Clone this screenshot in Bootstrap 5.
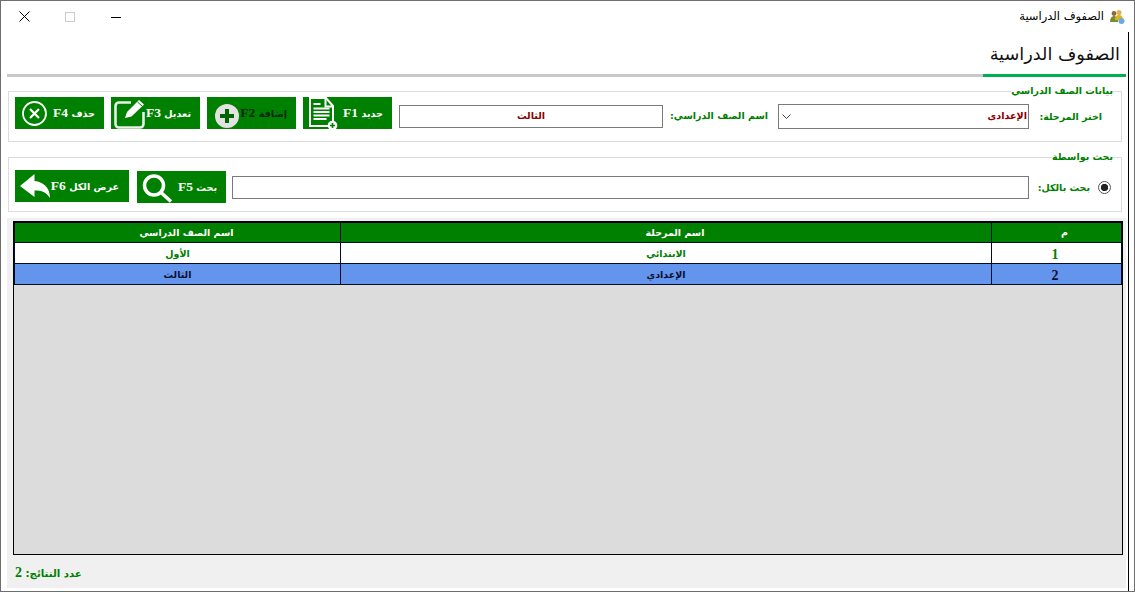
<!DOCTYPE html>
<html lang="ar" dir="rtl">
<head>
<meta charset="utf-8">
<title>الصفوف الدراسية</title>
<link href="https://cdn.jsdelivr.net/npm/bootstrap@5.3.0/dist/css/bootstrap.min.css" rel="stylesheet">
<style>
html,body{height:100%;margin:0;background:#fff;overflow:hidden}
body{font-family:"Liberation Serif","DejaVu Sans",serif;color:#000}
.win{width:1135px;height:592px;border:1px solid #6e6e6e;background:#fff}
.tbar{height:31px;padding-inline-start:9px}
.tbar-title{font:11.5px/14px "DejaVu Sans",sans-serif;padding-inline-start:5px;margin-top:-2px}
.ctl{width:46px;height:30px}
.pane{margin-inline-start:5px;border-inline-start:1px solid #000;padding-inline-start:2px;min-height:0}
.tabhead{height:45px}
.tab-on{width:143px;border-bottom:3px solid #00b050;font:17.7px "DejaVu Sans",sans-serif;color:#111;padding:12px 6px 0 0;text-align:right}
.tab-off{margin-inline-end:6px;border-bottom:3px solid #c8c8c8}
.fset{position:relative;border:1px solid #dcdcdc;margin-inline:4px 7px}
.fs1{height:51px;margin-top:14px;padding:12px 19px 0 6px}
.fs2{height:55px;margin-top:15px;padding:18px 10px 0 6px}
.lgd{position:absolute;top:-8px;right:8px;background:#fff;padding:0;font:bold 9.5px/14px "DejaVu Sans",sans-serif;color:#008000}
.lbl{font:bold 9.5px "DejaVu Sans",sans-serif;color:#008000;white-space:nowrap;flex:none}
.l1{width:73px;padding-top:7px}
.l2{width:115px;padding:6px 10px 0 0}
.l3{width:69px;padding:6px 8px 0 0}
.gbtn.btn{--bs-btn-padding-x:0;--bs-btn-padding-y:0;--bs-btn-border-width:0;--bs-btn-border-radius:0;--bs-btn-color:#fff;--bs-btn-bg:#008000;--bs-btn-hover-bg:#008000;--bs-btn-hover-color:#fff;width:89px;height:32px;padding-inline:9px 0;font:bold 13.5px "Liberation Serif",serif;overflow:hidden;flex:none;white-space:nowrap}
.gbtn .ar{font:bold 9.6px "DejaVu Sans",sans-serif}
.gbtn svg{margin-inline-start:auto;flex:none}
.dark.btn{--bs-btn-color:#0c260c;--bs-btn-hover-color:#0c260c}
.wide.btn{width:114px;padding-inline-start:10px;margin-top:-1px}
.fld.form-control,.fld.form-select{border:1px solid #7a7a7a;border-radius:0;padding:0 4px;min-height:0;box-shadow:none;background-color:#fff;flex:none}
.inp-name.form-control{width:264px;height:23px;margin-top:1px;padding-bottom:2px;text-align:center;font:bold 9.6px "DejaVu Sans",sans-serif;color:#8b0000}
.sel.form-select{width:251px;height:25px;padding-right:1px;padding-bottom:2px;font:bold 9.6px "DejaVu Sans",sans-serif;color:#8b0000;background-position:left 3px center;background-size:9px 9px;background-image:url("data:image/svg+xml,%3Csvg xmlns='http://www.w3.org/2000/svg' viewBox='0 0 9 9'%3E%3Cpath d='M.5 2.500 4.500 6.500 8.500 2.500' fill='none' stroke='%23444'/%3E%3C/svg%3E")}
.srch.form-control{width:797px;height:23px}
.rd.form-check-input{width:13px;height:13px;margin:5px 0 0;flex:none;border:1px solid #555;background-color:#fff;box-shadow:none;background-image:radial-gradient(circle,#222 0 3.4px,transparent 3.9px)}
.sheet{background:#f0f0f0;margin-top:6px;padding:3px 3px 0 0;width:1119px;height:370px;margin-inline-start:0;margin-inline-end:auto}
.grid-box{height:334px;background:#dcdcdc;border:1px solid #000;border-top-width:2px;width:1110px}
.grid-tbl{width:100%;table-layout:fixed;border-collapse:collapse;text-align:center}
.grid-tbl th,.grid-tbl td{height:21px;padding:2px 0 0;border:1px solid #000c2a;border-top:0;font:bold 9.5px/16px "DejaVu Sans",sans-serif;vertical-align:middle}
.grid-tbl th{height:19px;background:#008000;color:#fff;padding:1px 0 0 18px}
.grid-tbl td{background:#fff;color:#008000}
.grid-tbl tr.sel-row td{background:#6495ed;color:#0a1030}
.grid-tbl td.num{font:bold 14px/17px "Liberation Serif",serif;padding:3px 3px 0 0}
.grid-tbl th.mhead{padding-left:16px}
.res{padding:10px 0 0 0;text-align:left;font:bold 14px "Liberation Serif",serif;color:#008000;margin-left:8px}
.res span{font:bold 10.2px "DejaVu Sans",sans-serif}
</style>
</head>
<body>
<div class="win d-flex flex-column">
  <div class="tbar d-flex align-items-center flex-none">
    <svg width="16" height="16" viewBox="0 0 16 16"><circle cx="5" cy="4.500" r="2.400" fill="#8a6a3a"/><path d="M1 13c0-4 2-6 4-6s4 2 4 6z" fill="#7d8a35"/><circle cx="10" cy="3.500" r="2.500" fill="#e0b050"/><path d="M6 11c0-4 2-5 4-5s4 1 4 5z" fill="#d8b820"/><circle cx="12.500" cy="12" r="3" fill="#6fa8dc"/></svg>
    <span class="tbar-title">الصفوف الدراسية</span>
    <div class="d-flex me-auto">
      <div class="ctl d-flex align-items-center justify-content-center"><svg width="10" height="10"><path d="M0 5.500h10" stroke="#000"/></svg></div>
      <div class="ctl d-flex align-items-center justify-content-center"><svg width="10" height="10"><rect x=".5" y=".5" width="9" height="9" fill="none" stroke="#ccc"/></svg></div>
      <div class="ctl d-flex align-items-center justify-content-center"><svg width="11" height="11"><path d="M.5.500l10 10M10.500.500l-10 10" stroke="#000" fill="none"/></svg></div>
    </div>
  </div>
  <div class="pane flex-grow-1">
    <div class="tabhead d-flex">
      <div class="tab-on">الصفوف الدراسية</div>
      <div class="tab-off flex-grow-1"></div>
    </div>

    <div class="fset fs1 d-flex">
      <span class="lgd">بيانات الصف الدراسي</span>
      <span class="lbl l1">اختر المرحلة:</span>
      <select class="form-select fld sel"><option>الإعدادي</option></select>
      <span class="lbl l2">اسم الصف الدراسي:</span>
      <input class="form-control fld inp-name" value="الثالث">
      <div class="d-flex me-auto" style="gap:7px;margin-top:-7px">
        <button class="btn gbtn d-flex align-items-center"><span><span class="ar">جديد</span> F1</span>
          <svg width="36" height="32" viewBox="0 0 36 32"><path d="M7 1h16l7 8v20H7z" fill="none" stroke="#fff" stroke-width="2"/><path d="M22.500 1v8.500H30" fill="none" stroke="#fff" stroke-width="2"/><path d="M10.500 7h7M10.500 11.500h16M10.500 15h16M10.500 18.500h16M10.500 22h13" stroke="#fff" stroke-width="1.800"/><circle cx="29.500" cy="28.500" r="4.800" fill="#fff"/><path d="M29.500 26v5M27 28.500h5" stroke="#008000" stroke-width="1.600"/></svg></button>
        <button class="btn gbtn dark d-flex align-items-center"><span><span class="ar">إضافة</span> F2</span>
          <svg width="33" height="32" viewBox="0 0 33 32"><circle cx="20" cy="19" r="12" fill="#e2e2e2"/><path d="M20 12v14M13 19h14" stroke="#006400" stroke-width="4"/></svg></button>
        <button class="btn gbtn d-flex align-items-center"><span><span class="ar">تعديل</span> F3</span>
          <svg width="37" height="32" viewBox="0 0 37 32"><path d="M22 5.500H10A3.500 3.500 0 0 0 6.500 9v18a3.500 3.500 0 0 0 3.500 3.500h21a3.500 3.500 0 0 0 3.500-3.500V15" fill="none" stroke="#e8f0e8" stroke-width="2.600"/><path d="M16 21l2-6L30 3l5 4.500L22.500 19.500z" fill="#fff"/><path d="M28.500 5l4.500 4" stroke="#008000"/></svg></button>
        <button class="btn gbtn d-flex align-items-center"><span><span class="ar">حذف</span> F4</span>
          <svg width="33" height="32" viewBox="0 0 33 32"><circle cx="19.500" cy="16.500" r="11.500" fill="none" stroke="#fff" stroke-width="1.800"/><path d="M15 12l9 9M24 12l-9 9" stroke="#fff" stroke-width="2.200"/></svg></button>
      </div>
    </div>

    <div class="fset fs2 d-flex">
      <span class="lgd">بحث بواسطة</span>
      <input type="radio" class="form-check-input rd" checked>
      <span class="lbl l3">بحث بالكل:</span>
      <input class="form-control fld srch">
      <div class="d-flex me-auto" style="gap:8px;margin-top:-5px">
        <button class="btn gbtn d-flex align-items-center"><span><span class="ar">بحث</span> F5</span>
          <svg width="36" height="32" viewBox="0 0 36 32"><circle cx="17" cy="14.500" r="9.500" fill="none" stroke="#fff" stroke-width="3.500"/><path d="M24 21.500L34 30.500" stroke="#fff" stroke-width="3.500"/></svg></button>
        <button class="btn gbtn wide d-flex align-items-center"><span><span class="ar">عرض الكل</span> F6</span>
          <svg width="36" height="32" viewBox="0 0 36 32"><path d="M5 16L19.500 4v7C29 12 35 18 35 28 31 22 27 20.500 19.500 20.500V27z" fill="#fff"/></svg></button>
      </div>
    </div>

    <div class="sheet">
      <div class="grid-box">
        <table class="grid-tbl">
          <colgroup><col style="width:130px"><col style="width:651px"><col></colgroup>
          <thead><tr><th class="mhead">م</th><th>اسم المرحلة</th><th>اسم الصف الدراسي</th></tr></thead>
          <tbody>
            <tr><td class="num">1</td><td>الابتدائي</td><td>الأول</td></tr>
            <tr class="sel-row"><td class="num">2</td><td>الإعدادي</td><td>الثالث</td></tr>
          </tbody>
        </table>
      </div>
      <div class="res"><span>عدد النتائج:</span> 2</div>
    </div>
  </div>
</div>
<script src="https://cdn.jsdelivr.net/npm/bootstrap@5.3.0/dist/js/bootstrap.bundle.min.js"></script>
</body>
</html>
